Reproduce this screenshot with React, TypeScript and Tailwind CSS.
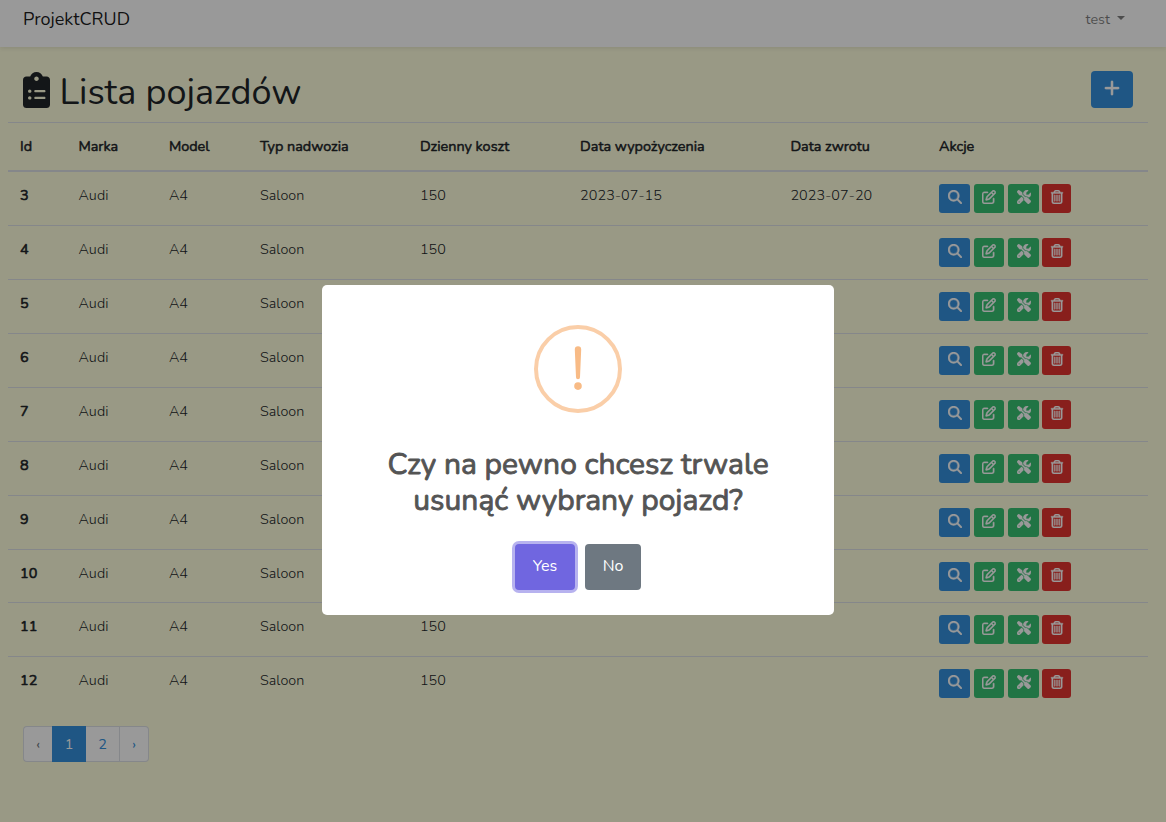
import React from "react";
import {
  FaMagnifyingGlass,
  FaRegPenToSquare,
  FaScrewdriverWrench,
  FaRegTrashCan,
  FaPlus,
} from "react-icons/fa6";

type Vehicle = { id: number; from?: string; to?: string };

const vehicles: Vehicle[] = [
  { id: 3, from: "2023-07-15", to: "2023-07-20" },
  { id: 4 },
  { id: 5 },
  { id: 6 },
  { id: 7 },
  { id: 8 },
  { id: 9 },
  { id: 10 },
  { id: 11 },
  { id: 12 },
];

const columns =
  "grid grid-cols-[58.4px_90.5px_91px_160px_160.2px_210.3px_148.6px_1fr] pl-3";

function ClipboardList() {
  return (
    <svg viewBox="0 0 384 512" className="h-9 w-[27px] fill-current">
      <path d="M336 64h-53.88C268.9 26.8 233.7 0 192 0S115.1 26.8 101.9 64H48C21.5 64 0 85.48 0 112v352C0 490.5 21.5 512 48 512h288c26.5 0 48-21.48 48-48v-352C384 85.48 362.5 64 336 64zM96 392c-13.25 0-24-10.75-24-24S82.75 344 96 344s24 10.75 24 24S109.3 392 96 392zM96 296c-13.25 0-24-10.75-24-24S82.75 248 96 248S120 258.8 120 272S109.3 296 96 296zM192 64c17.67 0 32 14.33 32 32c0 17.67-14.33 32-32 32S160 113.7 160 96C160 78.33 174.3 64 192 64zM304 384h-128C167.2 384 160 376.8 160 368C160 359.2 167.2 352 176 352h128c8.836 0 16 7.164 16 16C320 376.8 312.8 384 304 384zM304 288h-128C167.2 288 160 280.8 160 272C160 263.2 167.2 256 176 256h128C312.8 256 320 263.2 320 272C320 280.8 312.8 288 304 288z" />
    </svg>
  );
}

function Navbar() {
  return (
    <nav className="flex h-[47px] items-start justify-between bg-white pr-[41px] pl-[23px] shadow-[0_2px_4px_rgba(0,0,0,0.075)]">
      <a className="mt-[5px] text-[18px] leading-[28px] font-normal text-black/90">ProjektCRUD</a>
      <a className="mt-2 flex items-center text-[14.4px] leading-[23px] font-normal text-black/50">
        test
        <span className="mb-[3px] ml-[7px] border-x-[4.5px] border-t-[4.5px] border-x-transparent border-t-black/50" />
      </a>
    </nav>
  );
}

function Actions() {
  return (
    <div className="flex items-start pt-3 text-white">
      <button className="flex h-[29px] w-[31px] justify-center rounded-[3px] bg-[#3490dc] pt-[6px] pl-px">
        <FaMagnifyingGlass size={14} className="stroke-current stroke-[14px]" />
      </button>
      <button className="ml-1 flex h-[29px] w-[30px] justify-center rounded-[3px] bg-[#38c172] pt-[6px] pl-px">
        <FaRegPenToSquare size={14} className="stroke-current stroke-[14px]" />
      </button>
      <button className="ml-1 flex h-[29px] w-[31px] justify-center rounded-[3px] bg-[#38c172] pt-[6px] pl-px">
        <FaScrewdriverWrench size={14} className="stroke-current stroke-[10px]" />
      </button>
      <button className="ml-[3px] flex h-[29px] w-[29px] justify-center rounded-[3px] bg-[#e3342f] pt-[6px] pl-px">
        <FaRegTrashCan size={14} className="stroke-current stroke-[14px]" />
      </button>
    </div>
  );
}

function Table() {
  return (
    <div className="ml-2 w-[1140px] text-[14.4px] leading-[23px] text-[#212529]">
      <div
        className={
          columns +
          " h-[49.97px] border-t border-b-2 border-[#dee2e6] pt-3 font-normal [-webkit-text-stroke:0.5px_currentColor]"
        }
      >
        <span>Id</span>
        <span>Marka</span>
        <span>Model</span>
        <span>Typ nadwozia</span>
        <span>Dzienny koszt</span>
        <span>Data wypożyczenia</span>
        <span>Data zwrotu</span>
        <span>Akcje</span>
      </div>
      {vehicles.map((v, i) => (
        <div
          key={v.id}
          className={
            columns +
            " h-[53.9375px] border-[#dee2e6] tracking-[0.08px] " +
            (i < 9 ? "border-b" : "")
          }
        >
          <span className="pt-3 font-normal tracking-normal [-webkit-text-stroke:0.6px_currentColor]">{v.id}</span>
          <span className="pt-3">Audi</span>
          <span className="pt-3">A4</span>
          <span className="pt-3">Saloon</span>
          <span className="pt-3">150</span>
          <span className="pt-3">{v.from}</span>
          <span className="pt-3">{v.to}</span>
          <Actions />
        </div>
      ))}
    </div>
  );
}

function Pagination() {
  return (
    <div className="mt-[14.6px] ml-[23px] flex h-9 w-[126px] text-center text-[14.4px] leading-[34px] font-normal text-[#3490dc]">
      <span className="w-[29px] rounded-l-[4px] border border-r-0 border-[#dee2e6] bg-white text-[#6c757d]">‹</span>
      <span className="w-[34px] bg-[#3490dc] leading-9 text-white">1</span>
      <span className="w-[34px] border border-l-0 border-[#dee2e6] bg-white">2</span>
      <span className="w-[29px] rounded-r-[4px] border border-l-0 border-[#dee2e6] bg-white">›</span>
    </div>
  );
}

function ConfirmDialog() {
  return (
    <div className="fixed inset-0 flex items-start justify-center bg-black/40 pt-[285px] pr-[10px] font-normal">
      <div className="flex h-[330px] w-[512px] flex-col items-center rounded-[5px] bg-white pt-10">
        <div className="flex size-[88px] items-center justify-center rounded-full border-4 border-[#facea8] pb-[3px]">
          <svg viewBox="0 0 8 44" className="h-11 w-2 fill-[#f8bb86]">
            <path d="M0.8 3.4A3.2 3.2 0 0 1 7.2 3.4L6 31.2A2 2 0 0 1 2 31.2Z" />
            <circle cx="4" cy="40.1" r="3.8" />
          </svg>
        </div>
        <h2 className="mt-[34px] text-center text-[30px] leading-9 text-[#545454] [-webkit-text-stroke:0.9px_currentColor]">
          Czy na pewno chcesz trwale
          <br />
          usunąć wybrany pojazd?
        </h2>
        <div className="mt-[25px] flex gap-[10px] text-[16px] text-white">
          <button className="h-[46px] w-[60px] rounded-[4px] bg-[#7066e0] pb-[2px] shadow-[0_0_0_3px_rgba(112,102,224,0.5)]">
            Yes
          </button>
          <button className="h-[46px] w-14 rounded-[4px] bg-[#6e7881] pb-[2px]">No</button>
        </div>
      </div>
    </div>
  );
}

export default function App() {
  return (
    <div className="h-[822px] overflow-hidden bg-[#ffffde] font-['Nunito','Lato',sans-serif] font-light">
      <Navbar />
      <header className="flex h-[75px] items-start justify-between pt-6 pr-[33px] pl-[23px] text-[#212529]">
        <h1 className="flex items-start text-[36px] leading-[43px] font-normal">
          <span className="mt-px mr-[9.5px]">
            <ClipboardList />
          </span>
          Lista pojazdów
        </h1>
        <button className="flex h-[37px] w-[42px] justify-center rounded-[4px] bg-[#3490dc] pt-[8px] text-white">
          <FaPlus size={18} className="stroke-current stroke-[8px]" />
        </button>
      </header>
      <Table />
      <Pagination />
      <ConfirmDialog />
    </div>
  );
}
